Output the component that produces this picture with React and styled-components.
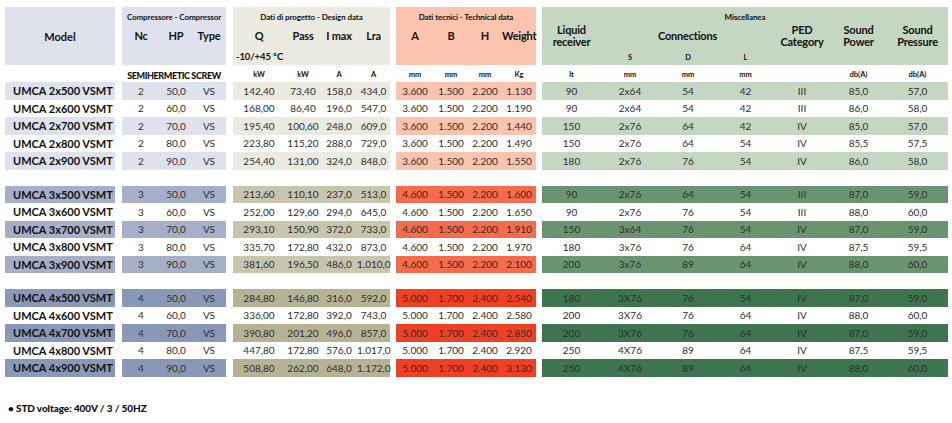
import React from 'react';
import styled, { createGlobalStyle } from 'styled-components';

const GlobalStyle = createGlobalStyle`
  body {
    margin: 0;
    background: #ffffff;
  }
`

// column widths per segment, and the gap in front of each segment
const SEGMENTS = [
  { key: 'model', gap: 0, cols: [110] },
  { key: 'comp', gap: 7, cols: [38, 32, 34] },
  { key: 'design', gap: 7, cols: [52, 36, 36, 33] },
  { key: 'tech', gap: 6, cols: [38, 34, 34, 34] },
  { key: 'misc', gap: 6, cols: [59, 58, 58, 57, 56, 57, 61] },
];

// colours: header / group 1, group 2, group 3
const COLORS = {
  model: ['#dfe1ec', '#a6afc8', '#8a98b8'],
  comp: ['#dfe1ec', '#a6afc8', '#8a98b8'],
  design: ['#eaeae0', '#c8c5af', '#b6b395'],
  tech: ['#fcc4ae', '#f56b4b', '#ef4024'],
  misc: ['#c5d6c2', '#6a9370', '#3f7450'],
};

const GROUPS = [
  [
    ['UMCA 2x500 VSMT', '2', '50,0', 'VS', '142,40', '73,40', '158,0', '434,0', '3.600', '1.500', '2.200', '1.130', '90', '2x64', '54', '42', 'III', '85,0', '57,0'],
    ['UMCA 2x600 VSMT', '2', '60,0', 'VS', '168,00', '86,40', '196,0', '547,0', '3.600', '1.500', '2.200', '1.190', '90', '2x64', '54', '42', 'III', '86,0', '58,0'],
    ['UMCA 2x700 VSMT', '2', '70,0', 'VS', '195,40', '100,60', '248,0', '609,0', '3.600', '1.500', '2.200', '1.440', '150', '2x76', '64', '42', 'IV', '85,0', '57,0'],
    ['UMCA 2x800 VSMT', '2', '80,0', 'VS', '223,80', '115,20', '288,0', '729,0', '3.600', '1.500', '2.200', '1.490', '150', '2x76', '64', '54', 'IV', '85,5', '57,5'],
    ['UMCA 2x900 VSMT', '2', '90,0', 'VS', '254,40', '131,00', '324,0', '848,0', '3.600', '1.500', '2.200', '1.550', '180', '2x76', '76', '54', 'IV', '86,0', '58,0'],
  ],
  [
    ['UMCA 3x500 VSMT', '3', '50,0', 'VS', '213,60', '110,10', '237,0', '513,0', '4.600', '1.500', '2.200', '1.600', '90', '2x76', '64', '54', 'III', '87,0', '59,0'],
    ['UMCA 3x600 VSMT', '3', '60,0', 'VS', '252,00', '129,60', '294,0', '645,0', '4.600', '1.500', '2.200', '1.650', '90', '2x76', '76', '54', 'III', '88,0', '60,0'],
    ['UMCA 3x700 VSMT', '3', '70,0', 'VS', '293,10', '150,90', '372,0', '733,0', '4.600', '1.500', '2.200', '1.910', '150', '3x64', '76', '54', 'IV', '87,0', '59,0'],
    ['UMCA 3x800 VSMT', '3', '80,0', 'VS', '335,70', '172,80', '432,0', '873,0', '4.600', '1.500', '2.200', '1.970', '180', '3x76', '76', '64', 'IV', '87,5', '59,5'],
    ['UMCA 3x900 VSMT', '3', '90,0', 'VS', '381,60', '196,50', '486,0', '1.010,0', '4.600', '1.500', '2.200', '2.100', '200', '3x76', '89', '64', 'IV', '88,0', '60,0'],
  ],
  [
    ['UMCA 4x500 VSMT', '4', '50,0', 'VS', '284,80', '146,80', '316,0', '592,0', '5.000', '1.700', '2.400', '2.540', '180', '3X76', '76', '54', 'IV', '87,0', '59,0'],
    ['UMCA 4x600 VSMT', '4', '60,0', 'VS', '336,00', '172,80', '392,0', '743,0', '5.000', '1.700', '2.400', '2.580', '200', '3X76', '76', '64', 'IV', '88,0', '60,0'],
    ['UMCA 4x700 VSMT', '4', '70,0', 'VS', '390,80', '201,20', '496,0', '857,0', '5.000', '1.700', '2.400', '2.850', '200', '3X76', '76', '64', 'IV', '87,0', '59,0'],
    ['UMCA 4x800 VSMT', '4', '80,0', 'VS', '447,80', '172,80', '576,0', '1.017,0', '5.000', '1.700', '2.400', '2.920', '250', '4X76', '89', '64', 'IV', '87,5', '59,5'],
    ['UMCA 4x900 VSMT', '4', '90,0', 'VS', '508,80', '262,00', '648,0', '1.172,0', '5.000', '1.700', '2.400', '3.130', '250', '4X76', '89', '64', 'IV', '88,0', '60,0'],
  ],
];

const UNITS = {
  design: ['kW', 'kW', 'A', 'A'],
  tech: ['mm', 'mm', 'mm', 'Kg'],
  misc: ['lt', 'mm', 'mm', 'mm', '', 'db(A)', 'db(A)'],
};

const Page = styled.div`
  font-family: Lato, "Open Sans", "DejaVu Sans", sans-serif;
  color: #111111;
  padding: 7px 0 0 5px;
  width: 952px;
  box-sizing: border-box;
`
const Row = styled.div`
  display: flex;
  height: ${p => p.$h}px;
`
const Group = styled.div`
  margin-top: ${p => (p.$first ? 0 : 16)}px;
`
const Segment = styled.div`
  display: grid;
  grid-template-columns: ${p => p.$cols.map(c => c + 'px').join(' ')};
  margin-left: ${p => p.$gap}px;
  background: ${p => p.$bg || 'transparent'};
  align-items: center;
`
const HeadSegment = styled(Segment)`
  grid-template-rows: 17px 24px 17px;
`
const GroupTitle = styled.div`
  grid-column: 1 / -1;
  grid-row: 1;
  text-align: center;
  font-size: 8px;
  font-weight: 700;
  letter-spacing: -0.1px;
  padding-top: 2px;
`
const ColTitle = styled.div`
  grid-row: 2;
  grid-column: ${p => p.$span || 'auto'};
  text-align: center;
  font-size: 11px;
  font-weight: 700;
  line-height: 12px;
  letter-spacing: -0.2px;
`
const SubTitle = styled.div`
  grid-row: 3;
  grid-column: ${p => p.$col};
  text-align: center;
  font-size: 7.5px;
  font-weight: 700;
  padding-top: 2px;
`
const ModelTitle = styled.div`
  grid-row: 1 / -1;
  text-align: center;
  font-size: 11px;
  font-weight: 700;
`
const RangeNote = styled.div`
  grid-row: 3;
  grid-column: 1 / -1;
  padding-left: 3px;
  font-size: 9.5px;
  font-weight: 700;
  letter-spacing: -0.1px;
`
const Unit = styled.div`
  text-align: center;
  font-size: 7.5px;
  font-weight: 700;
  padding-top: 2px;
`
const ScrewLabel = styled.div`
  grid-column: 1 / -1;
  text-align: center;
  font-size: 9px;
  font-weight: 900;
  letter-spacing: -0.4px;
  padding-top: 3px;
`
const ModelCell = styled.div`
  padding-left: 8px;
  font-size: 11px;
  font-weight: 700;
  color: #111111;
  white-space: nowrap;
`
const Cell = styled.div`
  text-align: center;
  font-size: 10px;
  color: #2e2e2e;
  white-space: nowrap;
`
const Footer = styled.div`
  margin-top: 25px;
  padding-left: 3px;
  font-size: 10px;
  font-weight: 900;
  letter-spacing: -0.1px;
`

const slices = [[0, 1], [1, 4], [4, 8], [8, 12], [12, 19]];

const Header = () => (
  <>
    <Row $h={58}>
      <HeadSegment $cols={SEGMENTS[0].cols} $gap={0} $bg={COLORS.model[0]}>
        <ModelTitle>Model</ModelTitle>
      </HeadSegment>
      <HeadSegment $cols={SEGMENTS[1].cols} $gap={7} $bg={COLORS.comp[0]}>
        <GroupTitle>Compressore - Compressor</GroupTitle>
        <ColTitle>Nc</ColTitle>
        <ColTitle>HP</ColTitle>
        <ColTitle>Type</ColTitle>
      </HeadSegment>
      <HeadSegment $cols={SEGMENTS[2].cols} $gap={7} $bg={COLORS.design[0]}>
        <GroupTitle>Dati di progetto - Design data</GroupTitle>
        <ColTitle>Q</ColTitle>
        <ColTitle>Pass</ColTitle>
        <ColTitle>I max</ColTitle>
        <ColTitle>Lra</ColTitle>
        <RangeNote>-10/+45 °C</RangeNote>
      </HeadSegment>
      <HeadSegment $cols={SEGMENTS[3].cols} $gap={6} $bg={COLORS.tech[0]}>
        <GroupTitle>Dati tecnici - Technical data</GroupTitle>
        <ColTitle>A</ColTitle>
        <ColTitle>B</ColTitle>
        <ColTitle>H</ColTitle>
        <ColTitle>Weight</ColTitle>
      </HeadSegment>
      <HeadSegment $cols={SEGMENTS[4].cols} $gap={6} $bg={COLORS.misc[0]}>
        <GroupTitle>Miscellanea</GroupTitle>
        <ColTitle>Liquid<br />receiver</ColTitle>
        <ColTitle $span="2 / 5">Connections</ColTitle>
        <ColTitle>PED<br />Category</ColTitle>
        <ColTitle>Sound<br />Power</ColTitle>
        <ColTitle>Sound<br />Pressure</ColTitle>
        <SubTitle $col={2}>S</SubTitle>
        <SubTitle $col={3}>D</SubTitle>
        <SubTitle $col={4}>L</SubTitle>
      </HeadSegment>
    </Row>
    <Row $h={17}>
      <Segment $cols={SEGMENTS[0].cols} $gap={0} />
      <Segment $cols={SEGMENTS[1].cols} $gap={7}>
        <ScrewLabel>SEMIHERMETIC SCREW</ScrewLabel>
      </Segment>
      {['design', 'tech', 'misc'].map((k, i) => (
        <Segment key={k} $cols={SEGMENTS[i + 2].cols} $gap={SEGMENTS[i + 2].gap}>
          {UNITS[k].map((u, j) => <Unit key={j}>{u}</Unit>)}
        </Segment>
      ))}
    </Row>
  </>
);

const App = () => (
  <Page>
    <GlobalStyle />
    <Header />
    {GROUPS.map((rows, g) => (
      <Group key={g} $first={g === 0}>
        {rows.map((r, i) => {
          const hl = i % 2 === 0;
          return (
            <Row key={r[0]} $h={17.5}>
              {SEGMENTS.map((s, si) => (
                <Segment
                  key={s.key}
                  $cols={s.cols}
                  $gap={s.gap}
                  $bg={hl ? COLORS[s.key][g] : null}
                >
                  {r.slice(slices[si][0], slices[si][1]).map((v, vi) =>
                    si === 0
                      ? <ModelCell key={vi}>{v}</ModelCell>
                      : <Cell key={vi}>{v}</Cell>
                  )}
                </Segment>
              ))}
            </Row>
          );
        })}
      </Group>
    ))}
    <Footer>• STD voltage: 400V / 3 / 50HZ</Footer>
  </Page>
);

export default App;
